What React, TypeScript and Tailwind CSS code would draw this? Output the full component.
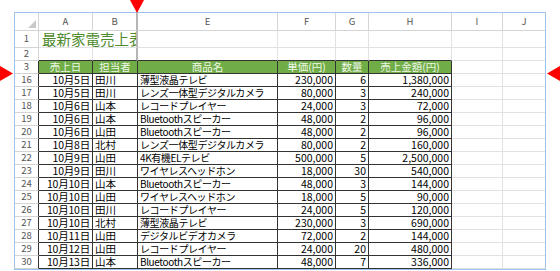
import React from "react";

type Row = [string, string, string, string, string, string, string];

const rows: Row[] = [
  ["16", "10月5日", "田川", "薄型液晶テレビ", "230,000", "6", "1,380,000"],
  ["17", "10月5日", "田川", "レンズ一体型デジタルカメラ", "80,000", "3", "240,000"],
  ["18", "10月6日", "山本", "レコードプレイヤー", "24,000", "3", "72,000"],
  ["19", "10月6日", "山本", "Bluetoothスピーカー", "48,000", "2", "96,000"],
  ["20", "10月6日", "山田", "Bluetoothスピーカー", "48,000", "2", "96,000"],
  ["21", "10月8日", "北村", "レンズ一体型デジタルカメラ", "80,000", "2", "160,000"],
  ["22", "10月9日", "山田", "4K有機ELテレビ", "500,000", "5", "2,500,000"],
  ["23", "10月9日", "田川", "ワイヤレスヘッドホン", "18,000", "30", "540,000"],
  ["24", "10月10日", "山本", "Bluetoothスピーカー", "48,000", "3", "144,000"],
  ["25", "10月10日", "山田", "ワイヤレスヘッドホン", "18,000", "5", "90,000"],
  ["26", "10月10日", "田川", "レコードプレイヤー", "24,000", "5", "120,000"],
  ["27", "10月10日", "北村", "薄型液晶テレビ", "230,000", "3", "690,000"],
  ["28", "10月11日", "山田", "デジタルビデオカメラ", "72,000", "2", "144,000"],
  ["29", "10月12日", "山田", "レコードプレイヤー", "24,000", "20", "480,000"],
  ["30", "10月13日", "山本", "Bluetoothスピーカー", "48,000", "7", "336,000"],
];

const hdr = "flex items-center justify-center text-[9.5px] leading-none text-[#555] border-r border-b border-[#d4d4d4]";
const grid = "border-r border-b border-[#e2e2e2]";
const dat = "flex items-center border-r border-b border-[#333] px-[2px] text-[10.5px] leading-none text-black whitespace-nowrap";
const green = "flex items-center justify-center border-r border-b border-[#333] bg-[#70ad47] text-[10.5px] leading-none text-[#eef7e8] whitespace-nowrap";

function Triangle({ dir }: { dir: "down" | "right" | "left" }) {
  const pts =
    dir === "down" ? "0,0 14,0 7,13" : dir === "right" ? "0,0 13,7.5 0,15" : "13,0 0,7.5 13,15";
  const w = dir === "down" ? 14 : 13;
  const h = dir === "down" ? 13 : 15;
  return (
    <svg width={w} height={h} viewBox={`0 0 ${w} ${h}`}>
      <polygon points={pts} fill="#ff0000" />
    </svg>
  );
}

export default function App() {
  return (
    <div
      className="relative w-[560px] h-[271px] bg-white overflow-hidden leading-none"
      style={{ fontFamily: '"Noto Sans CJK JP", "Noto Sans", sans-serif' }}
    >
      <div className="absolute left-[130px] top-0">
        <Triangle dir="down" />
      </div>
      <div className="absolute left-0 top-[66px]">
        <Triangle dir="right" />
      </div>
      <div className="absolute left-[547px] top-[66px]">
        <Triangle dir="left" />
      </div>

      <div className="ml-[14px] mt-[12px] w-[532px] border border-[#9fc2ea] flex flex-col">
        {/* column headers */}
        <div className="flex h-[18px]">
          <div className="w-[24px] border-r border-b border-[#d4d4d4] relative">
            <svg className="absolute right-[2px] bottom-[2px]" width="8" height="8" viewBox="0 0 8 8">
              <polygon points="8,0 8,8 0,8" fill="#c9c9c9" />
            </svg>
          </div>
          <div className={`${hdr} w-[54px]`}>A</div>
          <div className={`${hdr} w-[45px] border-r-2 border-r-[#b5b5b5]`}>B</div>
          <div className={`${hdr} w-[140px]`}>E</div>
          <div className={`${hdr} w-[58px]`}>F</div>
          <div className={`${hdr} w-[33px]`}>G</div>
          <div className={`${hdr} w-[83px]`}>H</div>
          <div className={`${hdr} w-[51px]`}>I</div>
          <div className={`${hdr} w-[42px] border-r-0`}>J</div>
        </div>

        {/* row 1: title */}
        <div className="flex h-[17px]">
          <div className={`${hdr} w-[24px]`}>1</div>
          <div className="w-[99px] flex items-center border-b border-[#e2e2e2] border-r-2 border-r-[#b5b5b5] overflow-hidden">
            <span className="pl-[3px] text-[14.5px] leading-none text-[#4e8a2e] whitespace-nowrap">
              最新家電売上表
            </span>
          </div>
          <div className={`${grid} w-[140px]`} />
          <div className={`${grid} w-[58px]`} />
          <div className={`${grid} w-[33px]`} />
          <div className={`${grid} w-[83px]`} />
          <div className={`${grid} w-[51px]`} />
          <div className={`${grid} w-[42px] border-r-0`} />
        </div>

        {/* row 2 */}
        <div className="flex h-[13px]">
          <div className={`${hdr} w-[24px]`}>2</div>
          <div className="w-[54px] border-r border-b border-r-[#e2e2e2] border-b-[#333]" />
          <div className="w-[45px] border-b border-b-[#333] border-r-2 border-r-[#b5b5b5]" />
          <div className="w-[140px] border-r border-b border-r-[#e2e2e2] border-b-[#333]" />
          <div className="w-[58px] border-r border-b border-r-[#e2e2e2] border-b-[#333]" />
          <div className="w-[33px] border-r border-b border-r-[#e2e2e2] border-b-[#333]" />
          <div className="w-[83px] border-r border-b border-r-[#e2e2e2] border-b-[#333]" />
          <div className={`${grid} w-[51px]`} />
          <div className={`${grid} w-[42px] border-r-0`} />
        </div>

        {/* row 3: table header */}
        <div className="flex h-[13px]">
          <div className={`${hdr} w-[24px] border-r-[#333]`}>3</div>
          <div className={`${green} w-[54px]`}>売上日</div>
          <div className={`${green} w-[45px]`}>担当者</div>
          <div className={`${green} w-[140px]`}>商品名</div>
          <div className={`${green} w-[58px]`}>単価(円)</div>
          <div className={`${green} w-[33px]`}>数量</div>
          <div className={`${green} w-[83px]`}>売上金額(円)</div>
          <div className={`${grid} w-[51px]`} />
          <div className={`${grid} w-[42px] border-r-0`} />
        </div>

        {rows.map((r) => (
          <div key={r[0]} className="flex h-[13px]">
            <div className={`${hdr} w-[24px] border-r-[#333]`}>{r[0]}</div>
            <div className={`${dat} w-[54px] justify-end tracking-[-0.2px]`}>{r[1]}</div>
            <div className={`${dat} w-[45px]`}>{r[2]}</div>
            <div className={`${dat} w-[140px] text-[10px] tracking-[-0.4px]`}>{r[3]}</div>
            <div className={`${dat} w-[58px] justify-end`}>{r[4]}</div>
            <div className={`${dat} w-[33px] justify-end`}>{r[5]}</div>
            <div className={`${dat} w-[83px] justify-end`}>{r[6]}</div>
            <div className={`${grid} w-[51px]`} />
            <div className={`${grid} w-[42px] border-r-0`} />
          </div>
        ))}
      </div>
    </div>
  );
}
